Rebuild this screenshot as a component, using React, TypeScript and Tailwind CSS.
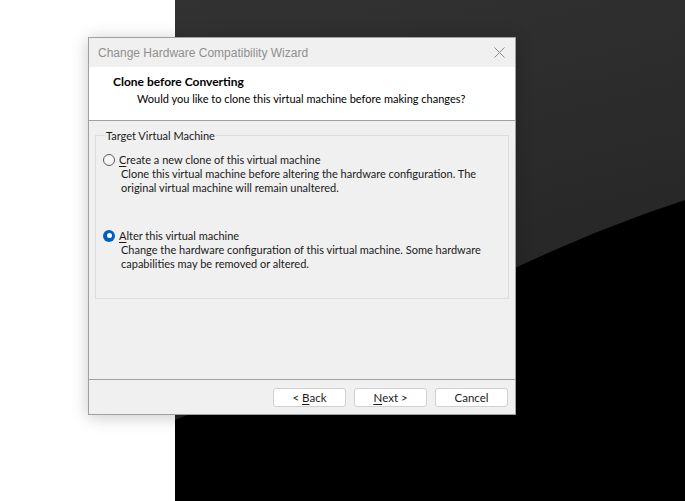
const body = { fontFamily: 'Lato, "Liberation Sans", sans-serif' };
const titleFont = { fontFamily: '"Liberation Sans", Arial, sans-serif' };

function Backdrop() {
  return (
    <div className="absolute left-[175px] top-0 h-[501px] w-[510px] bg-black">
      <svg width="510" height="501" viewBox="0 0 510 501">
        <defs>
          <linearGradient id="shade" x1="0" y1="0" x2="0.3" y2="1">
            <stop offset="0" stopColor="#323232" />
            <stop offset="1" stopColor="#242424" />
          </linearGradient>
        </defs>
        <path d="M0 0 H510 V200 C450 220 400 240 340 268 C250 310 100 380 0 420 Z" fill="url(#shade)" />
      </svg>
    </div>
  );
}

function Radio(props: { checked?: boolean }) {
  if (props.checked) {
    return (
      <span className="flex h-[12px] w-[12px] shrink-0 items-center justify-center rounded-full bg-[#0060c0]">
        <span className="h-[5px] w-[5px] rounded-full bg-white" />
      </span>
    );
  }
  return <span className="h-[12px] w-[12px] shrink-0 rounded-full border border-[#5a5a5a] bg-[#f6f6f6]" />;
}

function Option(props: { checked?: boolean; accel: string; rest: string; lines: string[] }) {
  return (
    <div>
      <div className="flex items-center gap-[4px]">
        <Radio checked={props.checked} />
        <span className="whitespace-nowrap leading-[15px]">
          <span className="underline decoration-1 underline-offset-2">{props.accel}</span>
          {props.rest}
        </span>
      </div>
      <div className="pl-[18px] leading-[14px]">
        {props.lines.map((l) => (
          <div key={l} className="whitespace-nowrap">{l}</div>
        ))}
      </div>
    </div>
  );
}

function Btn(props: { children: React.ReactNode }) {
  return (
    <button className="flex h-[19px] w-[73px] items-center justify-center rounded-[3px] border border-[#d0d0d0] bg-white text-[11.5px] leading-none text-[#1a1a1a]">
      {props.children}
    </button>
  );
}

export default function App() {
  return (
    <div className="relative h-[501px] w-[685px] overflow-hidden bg-white text-[11px] text-[#1a1a1a]" style={body}>
      <Backdrop />
      <div className="absolute left-[88px] top-[37px] flex h-[378px] w-[428px] flex-col border border-[#a0a0a0] bg-[#f0f0f0] shadow-[0_2px_16px_rgba(0,0,0,0.22)]">
        <div className="flex h-[29px] items-center justify-between bg-[#f0f0f0] pl-[9px] pr-[10px]">
          <span className="whitespace-nowrap text-[12px] text-[#8f8f8f]" style={titleFont}>
            Change Hardware Compatibility Wizard
          </span>
          <svg width="11" height="11" viewBox="0 0 11 11">
            <path d="M0.5 0.5 L10.5 10.5 M10.5 0.5 L0.5 10.5" stroke="#8a8a8a" strokeWidth="1" />
          </svg>
        </div>
        <div className="flex h-[54px] flex-col border-b border-[#a0a0a0] bg-white pl-[24px] pt-[6px]">
          <span className="whitespace-nowrap text-[12px] font-bold leading-[17px] text-black">Clone before Converting</span>
          <span className="whitespace-nowrap pl-[24px] leading-[17px] text-black">Would you like to clone this virtual machine before making changes?</span>
        </div>
        <div className="h-[258px] px-[6px] pt-[6px]">
          <fieldset className="h-[172px] min-w-0 border border-[#dcdcdc] px-[7px]">
            <legend className="ml-[2px] px-[1px] leading-[17px]">Target Virtual Machine</legend>
            <div className="mt-[8px] flex flex-col gap-[33px]">
              <Option
                accel="C"
                rest="reate a new clone of this virtual machine"
                lines={[
                  "Clone this virtual machine before altering the hardware configuration. The",
                  "original virtual machine will remain unaltered.",
                ]}
              />
              <Option
                checked
                accel="A"
                rest="lter this virtual machine"
                lines={[
                  "Change the hardware configuration of this virtual machine. Some hardware",
                  "capabilities may be removed or altered.",
                ]}
              />
            </div>
          </fieldset>
        </div>
        <div className="flex flex-1 justify-end gap-[8px] border-t border-[#a0a0a0] pr-[7px] pt-[8px]">
          <Btn>
            &lt;&nbsp;<span className="underline underline-offset-2">B</span>ack
          </Btn>
          <Btn>
            <span className="underline underline-offset-2">N</span>ext &gt;
          </Btn>
          <Btn>Cancel</Btn>
        </div>
      </div>
    </div>
  );
}
